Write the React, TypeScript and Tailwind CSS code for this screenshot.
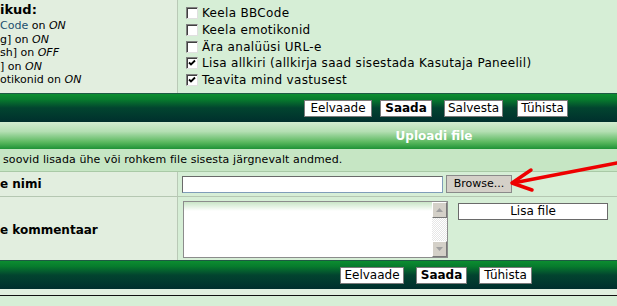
import React from 'react';

const font = { fontFamily: '"DejaVu Sans", Verdana, sans-serif' };

const Check = ({ on }: { on?: boolean }) => (
  <span className="inline-flex h-[12px] w-[12px] items-center justify-center border border-t-[#808080] border-l-[#808080] border-r-[#e0e0e0] border-b-[#e0e0e0] bg-white shadow-[inset_1px_1px_0_#404040]">
    {on && (
      <svg width="8" height="8" viewBox="0 0 8 8">
        <path d="M1 3.5 L3 5.5 L7 1.5" stroke="#000" strokeWidth="1.8" fill="none" />
      </svg>
    )}
  </span>
);

const Btn = ({ children, bold, w }: { children: React.ReactNode; bold?: boolean; w: string }) => (
  <button
    className={`h-[17px] border border-[#7a7a7a] bg-white text-[12px] leading-[15px] text-black ${w} ${bold ? 'font-bold' : ''}`}
  >
    {children}
  </button>
);

const DarkBar = ({ children }: { children: React.ReactNode }) => (
  <div className="flex h-[29px] items-center border-t border-[#1d5a42] bg-[linear-gradient(to_bottom,#0c8e30_0%,#077a2d_20%,#02442f_50%,#002f2d_100%)]">
    {children}
  </div>
);

export default function App() {
  const options = [
    { label: 'Keela BBCode' },
    { label: 'Keela emotikonid' },
    { label: 'Ära analüüsi URL-e' },
    { label: 'Lisa allkiri (allkirja saad sisestada Kasutaja Paneelil)', on: true },
    { label: 'Teavita mind vastusest', on: true },
  ];

  return (
    <div className="relative h-[306px] w-[617px] overflow-hidden bg-[#d6eed6] text-black" style={font}>
      {/* options row */}
      <div className="flex h-[93px]">
        <div className="w-[178px] border-r border-[#b9c9b6] bg-[#e2eedf] pt-[2px] text-[11px] leading-[13.6px]">
          <div className="mb-[1px] text-[13px] font-bold leading-[16px]">ikud:</div>
          <div><span className="text-[#1a4e6e]">Code</span> on <i>ON</i></div>
          <div>g] on <i>ON</i></div>
          <div>sh] on <i>OFF</i></div>
          <div>] on <i>ON</i></div>
          <div>otikonid on <i>ON</i></div>
        </div>
        <div className="flex-1 bg-[#d6eed6] pl-[8px] pt-[5px]">
          {options.map((o) => (
            <div key={o.label} className="flex h-[16.7px] items-center gap-[4px] text-[12px] tracking-[0.32px]">
              <Check on={o.on} />
              <span>{o.label}</span>
            </div>
          ))}
        </div>
      </div>

      <DarkBar>
        <div className="ml-[304px] flex">
          <Btn w="w-[68px]">Eelvaade</Btn>
          <span className="w-[8px]" />
          <Btn w="w-[52px]" bold>Saada</Btn>
          <span className="w-[12px]" />
          <Btn w="w-[59px]">Salvesta</Btn>
          <span className="w-[14px]" />
          <Btn w="w-[51px]">Tühista</Btn>
        </div>
      </DarkBar>

      {/* section header */}
      <div className="flex h-[27px] items-center justify-center bg-[linear-gradient(to_bottom,#d2ecd0_0%,#b4dfb3_35%,#5ab85e_75%,#1e9236_100%)] pl-[251px] text-[12px] font-bold text-white">
        Uploadi file
      </div>

      <div className="flex h-[23px] items-center border-b border-[#a9c9a6] bg-[#c6e6c4] pl-[3px] text-[11px] tracking-[0.1px]">
        soovid lisada ühe või rohkem file sisesta järgnevalt andmed.
      </div>

      {/* file name */}
      <div className="flex h-[25px] border-b border-[#b5c7b2]">
        <div className="flex w-[178px] items-center border-r border-[#b9c9b6] bg-[#e2eedf] text-[12px] font-bold">
          e nimi
        </div>
        <div className="flex flex-1 items-center gap-[3px] pl-[4px]">
          <input className="h-[17px] w-[261px] border border-[#7f9db9] border-t-[#6a6a6a] border-l-[#6a6a6a] bg-white" />
          <button className="h-[18px] w-[66px] border border-[#8a8a8a] bg-[#d4d0c8] text-[11px] leading-[16px]">
            Browse...
          </button>
        </div>
      </div>

      {/* comment */}
      <div className="flex h-[63px]">
        <div className="flex w-[178px] items-center border-r border-[#b9c9b6] bg-[#e2eedf] pt-[2px] text-[12px] font-bold">
          e kommentaar
        </div>
        <div className="flex flex-1 items-start gap-[10px] pl-[5px] pt-[4px]">
          <div className="flex h-[57px] w-[265px] border border-[#8c8c8c] bg-[linear-gradient(to_bottom,#c9e5c7_0px,#ffffff_9px)]">
            <div className="flex-1" />
            <div className="flex w-[15px] flex-col justify-between bg-[repeating-conic-gradient(#e6e6e6_0%_25%,#ffffff_0%_50%)] bg-[length:2px_2px]">
              <div className="flex h-[16px] items-center justify-center border border-t-white border-l-white border-r-[#777] border-b-[#777] bg-[#d4d0c8]">
                <svg width="7" height="4" viewBox="0 0 7 4"><path d="M3.5 0 L7 4 L0 4 Z" fill="#a0a0a0" /></svg>
              </div>
              <div className="flex h-[16px] items-center justify-center border border-t-white border-l-white border-r-[#777] border-b-[#777] bg-[#d4d0c8]">
                <svg width="7" height="4" viewBox="0 0 7 4"><path d="M0 0 L7 0 L3.5 4 Z" fill="#a0a0a0" /></svg>
              </div>
            </div>
          </div>
          <button className="mt-[2px] h-[17px] w-[150px] border border-[#6a6a6a] bg-white text-[12px] leading-[15px]">
            Lisa file
          </button>
        </div>
      </div>

      <DarkBar>
        <div className="ml-[340px] flex gap-[12px]">
          <Btn w="w-[64px]">Eelvaade</Btn>
          <Btn w="w-[51px]" bold>Saada</Btn>
          <Btn w="w-[53px]">Tühista</Btn>
        </div>
      </DarkBar>

      <div className="h-[6px] bg-[#e0efdf]" />
      <div className="h-[1px] bg-[#111]" />

      {/* red arrow */}
      <svg className="absolute left-[505px] top-[155px]" width="112" height="45" viewBox="0 0 112 45">
        <path d="M112 8 L8 28" stroke="#ee0000" strokeWidth="3.5" strokeLinecap="round" fill="none" />
        <path d="M26 15 L7 28 L27 35" stroke="#ee0000" strokeWidth="3.5" strokeLinecap="round" strokeLinejoin="round" fill="none" />
      </svg>
    </div>
  );
}
